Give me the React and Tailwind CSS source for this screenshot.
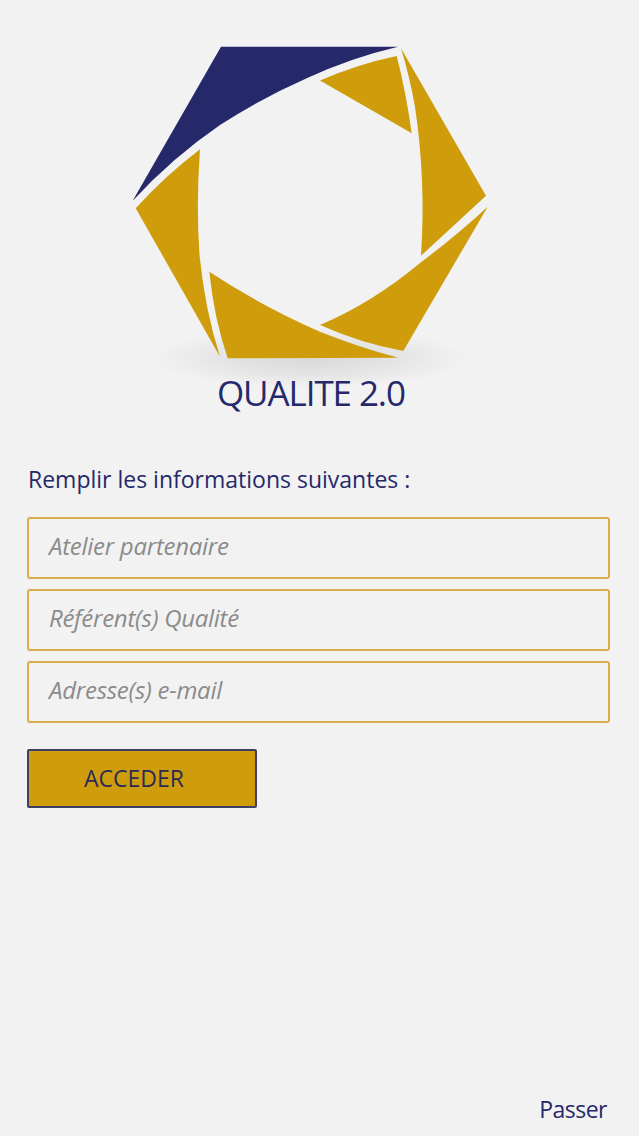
const navy = "#25296a";
const gold = "#cf9d0c";
const font = { fontFamily: '"Open Sans", sans-serif' };

function Logo() {
  return (
    <svg viewBox="130 40 360 336" width="360" height="336" className="block overflow-visible">
      <defs>
        <radialGradient id="shadow" cx="50%" cy="50%" r="50%">
          <stop offset="0%" stopColor="#d9d9d9" />
          <stop offset="50%" stopColor="#e3e3e3" />
          <stop offset="100%" stopColor="#f2f2f2" />
        </radialGradient>
      </defs>
      <ellipse cx="310" cy="358" rx="158" ry="30" fill="url(#shadow)" />
      <path fill={navy} d="M221 46.7 L398 46.7 Q350 58 306.7 78.3 Q262 98 220 125 Q172 158 132.7 200.7 Z" />
      <path fill={gold} d="M320 80.5 Q358 64 396.7 56 Q406 92 411.7 133.3 Z" />
      <path fill={gold} d="M401 48.3 L486 195.7 L421 255.7 Q426 180 415 107 Q410 78 401 48.3 Z" />
      <path fill={gold} d="M487.7 206.7 L403.3 351 Q360 343 320 325 Q372 303 420 263 Q456 236 487.7 206.7 Z" />
      <path fill={gold} d="M209.3 271.7 Q263 307 320 331.7 Q358 347 398.3 357.7 L227.7 358.3 Q214 318 209.3 271.7 Z" />
      <path fill={gold} d="M135.7 208.3 Q165 176 200 149.3 Q196 205 199.5 255 Q205 310 220 356.7 Z" />
    </svg>
  );
}

function Field({ placeholder }) {
  return (
    <div className="h-[62px] w-[583px] rounded-[3px] border-2 border-[#dcac4a] pl-[20px] flex items-center">
      <span className="text-[24px] italic text-[#8b8b8b] tracking-[-0.28px] relative -top-[2px]">{placeholder}</span>
    </div>
  );
}

export default function App() {
  return (
    <div style={font} className="w-[639px] h-[1136px] bg-[#f2f2f2] flex flex-col">
      <div className="pt-[40px] pl-[130px]">
        <Logo />
      </div>
      <h1 className="relative -top-[2px] text-[35px] leading-[38px] text-[#25296a] ml-[217px] tracking-[-1.1px] font-normal">
        QUALITE 2.0
      </h1>
      <p className="mt-[49px] ml-[28px] text-[23px] leading-[32px] text-[#25296a] tracking-[0px]">
        Remplir les informations suivantes :
      </p>
      <div className="mt-[22px] ml-[27px] flex flex-col gap-[10px]">
        <Field placeholder="Atelier partenaire" />
        <Field placeholder="Référent(s) Qualité" />
        <Field placeholder="Adresse(s) e-mail" />
      </div>
      <button className="mt-[26px] ml-[27px] w-[230px] h-[59px] rounded-[2px] border-2 border-[#3f3f63] bg-[#cf9d0c] text-left pl-[55px] text-[23px] text-[#2a2b55] tracking-[0px]">
        ACCEDER
      </button>
      <div className="mt-auto pb-[11px] pr-[32px] text-right text-[23px] leading-[32px] text-[#25296a] tracking-[-0.5px]">
        Passer
      </div>
    </div>
  );
}
